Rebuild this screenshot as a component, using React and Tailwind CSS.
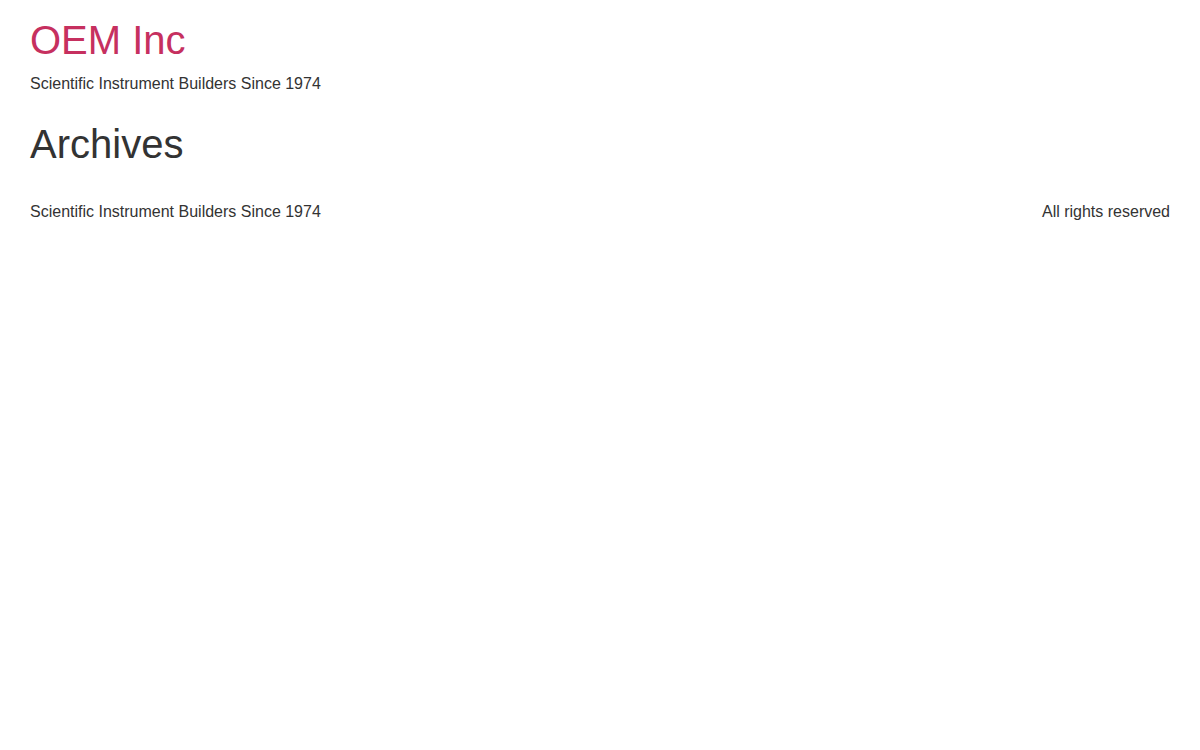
export default function App() {
  return (
    <div className="min-h-screen bg-white px-[30px] text-[#333] font-['Liberation_Sans',Arial,sans-serif]">
      <header className="pt-[16px]">
        <a href="#" className="block text-[40px] leading-[48px] text-[#c6305f]">
          OEM Inc
        </a>
        <p className="mt-[9px] text-[16px] leading-[22px]">Scientific Instrument Builders Since 1974</p>
      </header>
      <main className="mt-[25px]">
        <h1 className="text-[40px] leading-[48px]">Archives</h1>
      </main>
      <footer className="mt-[33px] flex justify-between text-[16px] leading-[22px]">
        <p>Scientific Instrument Builders Since 1974</p>
        <p>All rights reserved</p>
      </footer>
    </div>
  );
}
